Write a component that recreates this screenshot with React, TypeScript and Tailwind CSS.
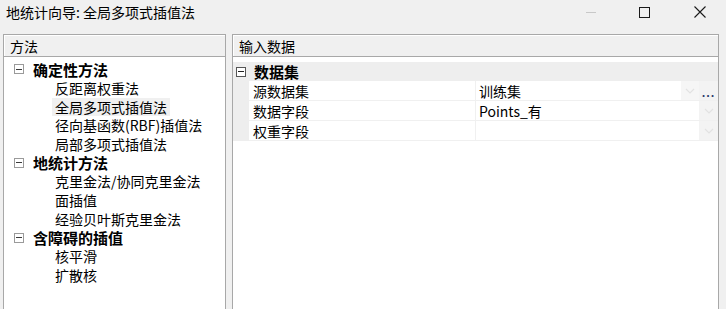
import React from 'react';

const treeGroups = [
  { title: '确定性方法', items: ['反距离权重法', '全局多项式插值法', '径向基函数(RBF)插值法', '局部多项式插值法'] },
  { title: '地统计方法', items: ['克里金法/协同克里金法', '面插值', '经验贝叶斯克里金法'] },
  { title: '含障碍的插值', items: ['核平滑', '扩散核'] },
];

const Expander = ({ dark }: { dark?: boolean }) => (
  <span
    className={`flex h-[10px] w-[10px] items-center justify-center border bg-white ${
      dark ? 'border-[#555]' : 'border-[#9a9a9a]'
    }`}
  >
    <span className={`h-px w-[6px] ${dark ? 'bg-[#222]' : 'bg-[#3a3a3a]'}`} />
  </span>
);

const DropArrow = () => (
  <svg width="10" height="6" viewBox="0 0 10 6">
    <path d="M1 1 L5 5 L9 1" fill="none" stroke="#e2e2e2" strokeWidth="1.2" />
  </svg>
);

const App = () => {
  return (
    <div className="flex h-[309px] w-[726px] flex-col overflow-hidden bg-[#f0f0f0] font-['Noto_Sans_CJK_SC',sans-serif] text-[14px] text-black">
      {/* title bar */}
      <div className="flex h-[24px] shrink-0 items-center pl-[6px]">
        <span className="leading-none">地统计向导: 全局多项式插值法</span>
        <div className="ml-auto flex items-center">
          <span className="mr-[43px] h-px w-[10px] bg-[#c8c8c8]" />
          <span className="mr-[44px] h-[11px] w-[11px] border border-[#1a1a1a]" />
          <svg width="12" height="12" viewBox="0 0 12 12" className="mr-[20px]">
            <path d="M0.5 0.5 L11.5 11.5 M11.5 0.5 L0.5 11.5" stroke="#1a1a1a" strokeWidth="1.1" />
          </svg>
        </div>
      </div>

      <div className="mt-[10px] flex h-[290px] shrink-0 pl-[3px]">
        {/* left: methods tree */}
        <div className="flex w-[223px] flex-col border border-[#a8a8a8] bg-white">
          <div className="flex h-[22px] items-center border-b border-[#a8a8a8] bg-[#f0f0f0] pl-[6px] leading-none shadow-[inset_1px_1px_0_#ffffff]">
            方法
          </div>
          <div className="flex flex-col pt-[3px]">
            {treeGroups.map((g) => (
              <div key={g.title} className="flex flex-col">
                <div className="flex h-[18.7px] items-center pl-[10px]">
                  <Expander />
                  <span className="ml-[9px] text-[15px] font-bold leading-none">{g.title}</span>
                </div>
                {g.items.map((it) => (
                  <div key={it} className="flex h-[18.7px] items-center pl-[48px]">
                    <span
                      className={`px-[3px] leading-[18px] ${
                        it === '全局多项式插值法' ? 'bg-[#f0f0f0]' : ''
                      }`}
                    >
                      {it}
                    </span>
                  </div>
                ))}
              </div>
            ))}
          </div>
        </div>

        {/* right: input data property grid */}
        <div className="ml-[6px] flex w-[487px] flex-col border border-[#a8a8a8] bg-white">
          <div className="flex h-[22px] items-center border-b border-[#a8a8a8] bg-[#f0f0f0] pl-[6px] leading-none shadow-[inset_1px_1px_0_#ffffff]">
            输入数据
          </div>
          <div className="mt-[5px] flex flex-col">
            <div className="flex h-[19px] items-center bg-[#eeeeee] pl-[3px]">
              <Expander dark />
              <span className="ml-[8px] text-[15px] font-bold leading-none">数据集</span>
            </div>
            {[
              { name: '源数据集', value: '训练集', more: true },
              { name: '数据字段', value: 'Points_有', more: false },
              { name: '权重字段', value: '', more: false },
            ].map((r) => (
              <div key={r.name} className="flex h-[20px]">
                <div className="w-[16px] bg-[#eeeeee]" />
                <div className="flex w-[227px] items-center border-b border-r border-[#f0f0f0] pl-[4px] leading-none">
                  {r.name}
                </div>
                <div className="flex flex-1 items-center border-b border-[#f0f0f0] pl-[3px] leading-none">
                  {r.value}
                </div>
                {r.more ? (
                  <>
                    <div className="flex w-[18px] items-center justify-center border-b border-[#f0f0f0] bg-[#f6f6f6]">
                      <DropArrow />
                    </div>
                    <div className="flex w-[19px] items-center justify-center border-b border-[#f0f0f0] bg-[#f3f3f3] pt-[3px] text-[11px] font-bold leading-none tracking-[1px] text-[#2a3a6a]">
                      ...
                    </div>
                  </>
                ) : (
                  <div className="flex w-[19px] items-center justify-center border-b border-[#f0f0f0] bg-[#f3f3f3]">
                    <DropArrow />
                  </div>
                )}
              </div>
            ))}
          </div>
        </div>
      </div>
    </div>
  );
};

export default App;
